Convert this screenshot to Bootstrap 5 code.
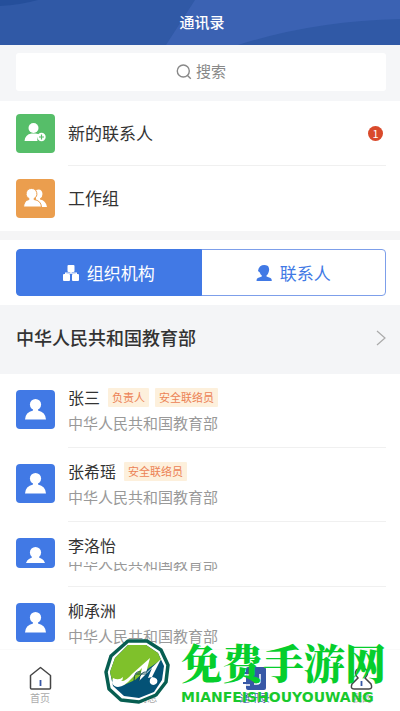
<!DOCTYPE html>
<html lang="zh-CN">
<head>
<meta charset="utf-8">
<meta name="viewport" content="width=device-width, initial-scale=1">
<title>通讯录</title>
<link href="https://cdn.jsdelivr.net/npm/bootstrap@5.3.0/dist/css/bootstrap.min.css" rel="stylesheet">
<style>
body{font-family:"Noto Sans CJK SC",sans-serif;color:#333;background:#fff}
.gutter{padding-left:16px;padding-right:14px}
.topbar{background:#3059a6;height:45px}
.topbar h1{font-size:15px;line-height:43px;color:#fff}
.search-band{background:#f5f6f8;padding-top:8px;padding-bottom:10px}
.search-band input{height:38px;border:0;border-radius:3px;font-size:15px;line-height:22px;padding:6px 12px 10px 46px}
.search-band input::placeholder{color:#888}
.search-icon{left:50%;top:11px;margin-left:-25px}
.tile{width:39px;height:39px;border-radius:4px;overflow:hidden}
.tile svg{display:block}
.green{background:#56be69}.orange{background:#eb9e4e}.blue{background:#4179e5}
.entry{font-size:17px;line-height:24px;color:#333;text-decoration:none}
.entry-row{gap:13px;height:65px}
.entry-body{height:65px;border-bottom:1px solid #f0f0f0}
.entry-row:last-child .entry-body{border-color:transparent}
.count{width:15px;height:15px;border-radius:50%;background:#d94a2b;color:#fff;font-size:11px;line-height:15px;margin-right:3px}
.band{height:9px;background:#f5f5f6}
.tabs{padding-top:9px;padding-bottom:9px}
.tabs .btn{height:47px;font-size:17px;border:1px solid #7d9fea;border-radius:4px;color:#4179e5;background:#fff;gap:8px;padding:0}
.tabs .btn.active{background:#4179e5;border-color:#4179e5;color:#fff}
.org-link{background:#f4f5f7;height:69px;font-size:18px;font-weight:500;color:#333;text-decoration:none;padding-bottom:4px}
.person{gap:13px;padding-top:16px}
.person-body{height:58px;border-bottom:1px solid #f0f0f0}
.name{font-size:16px;line-height:24px;margin-top:-5px;margin-right:2px;color:#333}
.name-line{height:21px;gap:6px}
.tag{font-size:11px;line-height:18px;height:19px;padding:0 4px;background:#fdf0dc;color:#ec8255;border-radius:1px;margin-top:-2px}
.dept{font-size:15px;line-height:24px;color:#999}
.short .tile{height:30px}
.short .person-body{height:49px}
.short .dept-clip{height:10px;margin-top:3px;overflow:hidden;display:flex;align-items:flex-end}
.short .dept-clip .dept{line-height:19px}
.tabbar{height:62px;background:#fff;border-top:1px solid #fafafa;padding:0 15px 0 17px}
.tabbar a{width:46px;font-size:10px;line-height:14px;color:#aaa;text-decoration:none;padding-top:16px}
.tabbar a.current{color:#3858a6}
.scroll-area{min-height:0;scrollbar-width:none}
.scroll-area::-webkit-scrollbar{display:none}
.site-mark{left:104px;bottom:6px;gap:11px;color:#06ce2c;pointer-events:none}
.site-name{font-family:"Noto Serif CJK SC","Noto Sans CJK SC",serif;font-size:41px;line-height:44px;font-weight:900}
.site-latin{font-family:"DejaVu Sans",sans-serif;font-size:14px;line-height:14px;font-weight:700;margin-top:6px;color:#19c92d}
</style>
<script src="https://cdn.jsdelivr.net/npm/bootstrap@5.3.0/dist/js/bootstrap.bundle.min.js"></script>
</head>
<body>
<svg class="d-none" aria-hidden="true">
  <symbol id="user" viewBox="0 0 39 39"><circle cx="19.5" cy="14.500" r="5.600" fill="#fff"/><path d="M17 18h5v2.500q7.500 1.500 8 9H9q.5-7.500 8-9z" fill="#fff"/></symbol>
</svg>
<div class="vh-100 d-flex flex-column position-relative overflow-hidden">
  <header class="topbar position-relative flex-shrink-0">
    <svg class="position-absolute top-0 start-0 w-100 h-100" viewBox="0 0 400 45" preserveAspectRatio="none" aria-hidden="true"><path d="M195 0 166 45h72q75-24 162-26V0z" fill="#3b62b3"/><path d="M0 0h38Q20 5 0 6z" fill="#254f9b"/></svg>
    <h1 class="position-relative text-center m-0 ps-1 fw-medium">通讯录</h1>
  </header>
  <main class="scroll-area flex-grow-1 overflow-auto">
    <div class="search-band gutter">
      <div class="position-relative">
        <svg class="search-icon position-absolute" width="16" height="16" viewBox="0 0 16 16" fill="none" stroke="#888" stroke-width="1.4" aria-hidden="true"><circle cx="7.3" cy="7" r="6"/><path d="m11.5 11.5 3.3 3.3"/></svg>
        <input type="search" class="form-control text-center" placeholder="搜索" aria-label="搜索">
      </div>
    </div>
    <nav class="gutter">
      <a href="#new" class="entry entry-row d-flex align-items-center">
        <span class="tile green flex-shrink-0"><svg width="39" height="39" viewBox="0 0 39 39" aria-hidden="true"><circle cx="17.5" cy="14" r="5" fill="#fff"/><path d="M8.5 27q.5-6.500 7-7.500h4q3 0 4 1.500-3 2-2 6z" fill="#fff"/><circle cx="25.500" cy="23" r="4.200" fill="#fff"/><path d="M25.500 20.500v5M23 23h5" stroke="#56be69" stroke-width="1.200"/></svg></span>
        <span class="entry-body flex-grow-1 d-flex align-items-center justify-content-between">新的联系人<span class="count text-center">1</span></span>
      </a>
      <a href="#groups" class="entry entry-row d-flex align-items-center">
        <span class="tile orange flex-shrink-0"><svg width="39" height="39" viewBox="0 0 39 39" aria-hidden="true"><path d="M20 11q6-2 6.500 4 0 3-2.500 4.500v1q6 1 7 7.500h-6q-1-5-5-6.500" fill="#fff"/><path d="M15.500 9.500a5.300 5.300 0 0 1 2.500 10v1q7 1 7.500 7.500h-18q.5-6.500 5.500-7.500v-1a5.300 5.300 0 0 1 2.500-10z" fill="#fff" stroke="#eb9e4e"/></svg></span>
        <span class="entry-body flex-grow-1 d-flex align-items-center">工作组</span>
      </a>
    </nav>
    <div class="band"></div>
    <div class="tabs gutter">
      <div class="btn-group w-100" role="group" aria-label="视图">
        <button type="button" class="btn active w-50 d-flex align-items-center justify-content-center"><svg width="16" height="16" viewBox="0 0 16 16" fill="currentColor" aria-hidden="true"><rect x="4.500" width="7" height="7" rx="1"/><rect y="9" width="7" height="7" rx="1"/><rect x="9" y="9" width="7" height="7" rx="1"/><path d="M7.300 6h1.400v1.500H14V10h-1.400V8.700H3.400V10H2V7.500h5.300z"/></svg>组织机构</button>
        <button type="button" class="btn w-50 d-flex align-items-center justify-content-center"><svg width="16" height="16" viewBox="0 0 16 16" fill="currentColor" aria-hidden="true"><path d="M4 1.500q3.500-2.500 8-.5 2 3 .5 6.500-.5 2-2 3v1l4 1.500q1.300.5 1.300 3H.5q0-2.500 1.300-3l4-1.500v-1q-1.500-1-2-3L2 6q.3-3 2-4.500z"/></svg>联系人</button>
      </div>
    </div>
    <a href="#org" class="org-link gutter d-flex align-items-center justify-content-between">中华人民共和国教育部<svg width="10" height="16" viewBox="0 0 10 16" fill="none" stroke="#aaa" stroke-width="1.200" aria-hidden="true"><path d="m1 1 8 7-8 7"/></svg></a>
    <ul class="list-unstyled gutter m-0">
      <li class="person d-flex"><span class="tile blue flex-shrink-0"><svg width="39" height="39" aria-hidden="true"><use href="#user"/></svg></span>
        <div class="person-body flex-grow-1"><div class="name-line d-flex"><span class="name">张三</span><span class="tag">负责人</span><span class="tag">安全联络员</span></div><div class="dept">中华人民共和国教育部</div></div></li>
      <li class="person d-flex"><span class="tile blue flex-shrink-0"><svg width="39" height="39" aria-hidden="true"><use href="#user"/></svg></span>
        <div class="person-body flex-grow-1"><div class="name-line d-flex"><span class="name">张希瑶</span><span class="tag">安全联络员</span></div><div class="dept">中华人民共和国教育部</div></div></li>
      <li class="person short d-flex"><span class="tile blue flex-shrink-0"><svg width="39" height="30" viewBox="0 0 39 30" aria-hidden="true"><circle cx="19.500" cy="14.500" r="5.600" fill="#fff"/><path d="M17 18h5q1 2 4 3 2 1 3 4H10q1-3 3-4 3-1 4-3z" fill="#fff"/></svg></span>
        <div class="person-body flex-grow-1"><div class="name-line d-flex"><span class="name">李洛怡</span></div><div class="dept-clip"><div class="dept">中华人民共和国教育部</div></div></div></li>
      <li class="person d-flex"><span class="tile blue flex-shrink-0"><svg width="39" height="39" aria-hidden="true"><use href="#user"/></svg></span>
        <div class="person-body flex-grow-1"><div class="name-line d-flex"><span class="name">柳承洲</span></div><div class="dept">中华人民共和国教育部</div></div></li>
    </ul>
  </main>
  <nav class="tabbar d-flex flex-shrink-0 justify-content-between">
    <a href="#home" class="d-flex flex-column align-items-center"><svg width="23" height="25" viewBox="0 0 23 25" fill="none" aria-hidden="true"><path d="M1.500 9.500 11.500 1.500l10 8V22q0 1-1 1h-18q-1 0-1-1z" stroke="#454545" stroke-width="1.500" stroke-linejoin="round"/><path d="M11.500 14v6" stroke="#3858a6" stroke-width="1.800"/></svg><span>首页</span></a>
    <a href="#messages" class="d-flex flex-column align-items-center"><svg width="23" height="25" viewBox="0 0 23 25" fill="none" stroke="#454545" stroke-width="1.500" aria-hidden="true"><path d="M2 3h19v16H9l-4 4v-4H2z"/></svg><span>消息</span></a>
    <a href="#contacts" class="current d-flex flex-column align-items-center"><svg width="23" height="25" viewBox="0 0 23 25" aria-hidden="true"><rect x="3" y="1" width="20" height="23" rx="2" fill="#3858a6"/><path d="M0 7h6M0 17h6" stroke="#3858a6" stroke-width="2"/><path d="M3 9h4M3 19h4M17 8v7q0 3-3 3h-3" fill="none" stroke="#fff" stroke-width="1.500"/></svg><span>通讯录</span></a>
    <a href="#mine" class="d-flex flex-column align-items-center"><svg width="23" height="25" viewBox="0 0 23 25" fill="none" aria-hidden="true"><path d="M8 12Q4 8 6.500 4q5-5 10 0 2.500 4-1.500 8l6 6q2 5-2 5H4q-4 0-2-5z" stroke="#454545" stroke-width="1.500"/><path d="M11.500 15v5" stroke="#3858a6" stroke-width="1.800"/></svg><span>我的</span></a>
  </nav>
  <div class="site-mark position-absolute d-flex align-items-center">
    <svg width="66" height="66" viewBox="0 0 66 66" aria-hidden="true"><path d="M24 2h19l14 9 7 15-2 17-10 13-17 7-18-2L5 50 2 33 7 17z" fill="#fff" stroke="#075e51" stroke-width="3.500" stroke-linejoin="round"/><path d="M24 6h18l12 8 6 13-2 14-8 12-15 6-15-2L9 47 6 33l5-14z" fill="#045276"/><path d="M24 6h18l12 8 3 7-12 8-14 12-11 5-12-5L6 33l5-14z" fill="#7fc12b"/><path d="M9 39q6 3 10-1 0 3-2 4 4 1 11-7L46 19l-4 15 15-14-9 18q7 1 5 6-4 4-7 0-1-4 2-6l-4 1 4-10-13 13 3-13-11 11q-6 7-13 8-4 0-6-4z" fill="#fff"/><path d="M30 42q0-11 7-9m-2 9q1-10 8-9m-11 2 11 0" fill="none" stroke="#083f48" stroke-width=".9"/></svg>
    <div><div class="site-name text-nowrap">免费手游网</div><div class="site-latin text-nowrap">MIANFEISHOUYOUWANG</div></div>
  </div>
</div>
</body>
</html>
